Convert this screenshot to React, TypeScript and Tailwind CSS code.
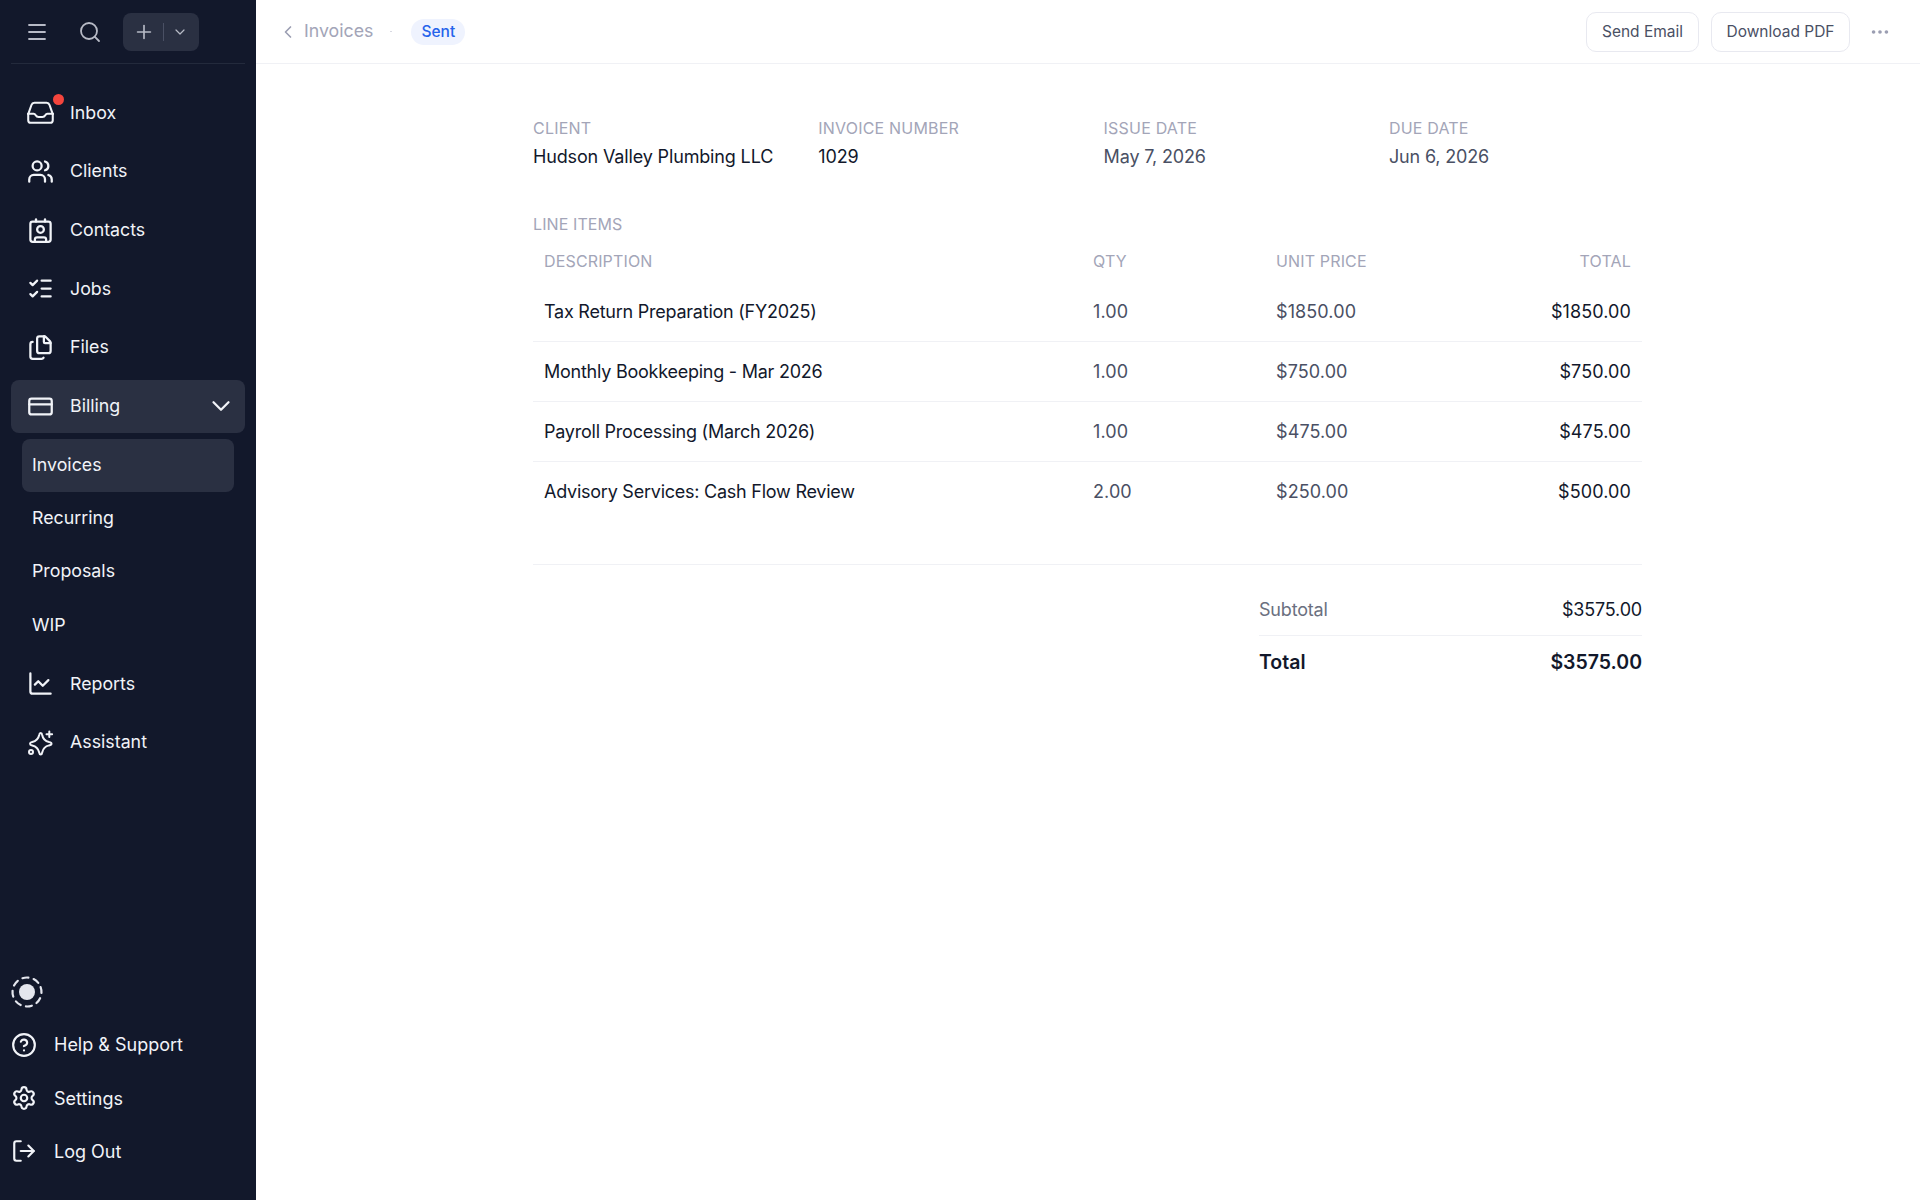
import { Menu, Search, Plus, ChevronDown, Users, Contact, ListChecks, Files, CreditCard, ChartLine, CircleHelp, Settings, LogOut, ChevronLeft, Ellipsis } from "lucide-react";

function InboxIcon() {
  return (
    <svg width="31" height="31" viewBox="0 0 24 24" fill="none" stroke="currentColor" strokeWidth="1.6" strokeLinecap="round" strokeLinejoin="round" className="shrink-0">
      <path d="M2.500 13v5a2 2 0 0 0 2 2h15a2 2 0 0 0 2-2v-5" />
      <path d="M2.500 13.200 5 6.200A2.500 2.500 0 0 1 7.300 4.500h9.400A2.500 2.500 0 0 1 19 6.200l2.500 7" />
      <path d="M2.500 13h4.200c.8 0 1.200.5 1.600 1.200.5.9 1.200 1.300 2.200 1.300h3c1 0 1.700-.4 2.200-1.300.4-.7.8-1.200 1.600-1.200h4.200" />
    </svg>
  );
}

function AssistantIcon() {
  return (
    <svg width="28" height="28" viewBox="0 0 28 28" fill="none" stroke="currentColor" strokeWidth="2" strokeLinecap="round" strokeLinejoin="round" className="shrink-0">
      <path d="M14.700 4Q15.900 4 16.200 6Q17.200 11.700 23 13Q25.500 13.500 25.500 14.700Q25.500 15.900 23 16.400Q17.400 17.700 16.200 23.500Q15.900 25.500 14.700 25.500Q13.500 25.500 13.200 23.500Q12 17.700 6.200 16.400Q4 15.900 4 14.700Q4 13.500 6.200 13Q12 11.700 13.200 6Q13.500 4 14.700 4Z" />
      <path d="M23.300 2.500v5.600M20.500 5.300h5.600" fill="none" />
      <circle cx="5" cy="23" r="2" />
    </svg>
  );
}

function StatusIcon() {
  return (
    <svg width="32" height="32" viewBox="0 0 32 32" fill="none" className="shrink-0">
      <circle cx="16" cy="16" r="14.500" stroke="#e4e6ee" strokeWidth="2.200" strokeDasharray="6 5.390" strokeLinecap="round" transform="rotate(-20 16 16)" />
      <circle cx="16" cy="16" r="8" fill="#e4e6ee" />
    </svg>
  );
}

const font = { fontFamily: "Inter, sans-serif" };

function NavItem({ icon, label, active, chevron, badge }: { icon: React.ReactNode; label: string; active?: boolean; chevron?: boolean; badge?: boolean }) {
  return (
    <div className={`relative flex h-[53px] items-center rounded-lg pl-[14px] pr-[9px] text-[#f1f3f8] ${active ? "bg-[#2a3042]" : ""}`}>
      <div className="flex w-[30px] justify-center">{icon}</div>
      <span className="ml-[15px] text-[17.800px]">{label}</span>
      {badge && <span className="absolute left-[42px] top-[8px] h-[11px] w-[11px] rounded-full bg-[#f5453d]" />}
      {chevron && <ChevronDown className="ml-auto shrink-0" size={30} strokeWidth={1.8} />}
    </div>
  );
}

function SubItem({ label, active }: { label: string; active?: boolean }) {
  return (
    <div className={`flex h-[53.300px] items-center rounded-lg pl-[10px] text-[17.800px] text-[#f1f3f8] ${active ? "bg-[#2a3042]" : ""}`}>{label}</div>
  );
}

function BottomItem({ icon, label }: { icon: React.ReactNode; label: string }) {
  return (
    <div className="flex h-[53.300px] items-center text-[#f1f3f8]">
      <div className="flex w-[26px] justify-center">{icon}</div>
      <span className="ml-[17px] text-[18px]">{label}</span>
    </div>
  );
}

const rows = [
  ["Tax Return Preparation (FY2025)", "1.00", "$1850.00", "$1850.00"],
  ["Monthly Bookkeeping - Mar 2026", "1.00", "$750.00", "$750.00"],
  ["Payroll Processing (March 2026)", "1.00", "$475.00", "$475.00"],
  ["Advisory Services: Cash Flow Review", "2.00", "$250.00", "$500.00"],
];

const meta = [
  ["CLIENT", "Hudson Valley Plumbing LLC", "text-[#12182b]"],
  ["INVOICE NUMBER", "1029", "text-[#12182b]"],
  ["ISSUE DATE", "May 7, 2026", "text-[#4a5064]"],
  ["DUE DATE", "Jun 6, 2026", "text-[#4a5064]"],
];

export default function App() {
  return (
    <div className="flex h-[1200px] w-[1920px] overflow-hidden bg-white" style={font}>
      <aside className="flex h-full w-[256px] shrink-0 flex-col bg-[#12182b]">
        <div className="mx-[11px] flex h-[64px] shrink-0 items-center border-b border-[#232a3c] pl-[14px] text-[#b7bac6]">
          <Menu size={24} strokeWidth={1.8} />
          <Search size={24} strokeWidth={1.8} className="ml-[29px]" />
          <div className="ml-[21px] flex h-[38px] w-[76px] items-center rounded-lg bg-[#2a3042] pl-[10px]">
            <Plus size={22} strokeWidth={1.8} />
            <span className="ml-[8px] h-[18px] w-px bg-[#4a5064]" />
            <ChevronDown size={16} strokeWidth={1.8} className="ml-[8px]" />
          </div>
        </div>
        <nav className="mt-[22.400px] flex flex-col gap-[5.700px] px-[11px]">
          <NavItem icon={<InboxIcon />} label="Inbox" badge />
          <NavItem icon={<Users size={27} strokeWidth={2} />} label="Clients" />
          <NavItem icon={<Contact size={27} strokeWidth={2} />} label="Contacts" />
          <NavItem icon={<ListChecks size={27} strokeWidth={2} />} label="Jobs" />
          <NavItem icon={<Files size={27} strokeWidth={2} />} label="Files" />
          <NavItem icon={<CreditCard size={27} strokeWidth={2} />} label="Billing" active chevron />
          <div className="px-[11px]">
            <SubItem label="Invoices" active />
            <SubItem label="Recurring" />
            <SubItem label="Proposals" />
            <SubItem label="WIP" />
          </div>
          <NavItem icon={<ChartLine size={27} strokeWidth={2} />} label="Reports" />
          <NavItem icon={<AssistantIcon />} label="Assistant" />
        </nav>
        <div className="mt-auto flex flex-col px-[11px] pb-[22px]">
          <div className="flex h-[53.300px] items-center pt-[2px]"><StatusIcon /></div>
          <BottomItem icon={<CircleHelp size={26} strokeWidth={2} />} label="Help & Support" />
          <BottomItem icon={<Settings size={26} strokeWidth={2} />} label="Settings" />
          <BottomItem icon={<LogOut size={26} strokeWidth={2} />} label="Log Out" />
        </div>
      </aside>
      <main className="flex min-w-0 flex-1 flex-col">
        <header className="flex h-[64px] shrink-0 items-center border-b border-[#f0f1f5] pl-[22px] pr-[29px]">
          <ChevronLeft size={20} strokeWidth={2} className="text-[#9b9eb2]" />
          <span className="ml-[6px] text-[17.750px] text-[#a3a5b8]">Invoices</span>
          <span className="ml-[17px] h-[1px] w-[2px] bg-[#d8d9e2]" />
          <span className="ml-[19px] flex h-[26px] items-center rounded-full bg-[#eff3fe] px-[10px] text-[15.500px] font-medium text-[#2563eb]">Sent</span>
          <button className="ml-auto flex h-[40px] w-[113px] items-center justify-center rounded-[10px] border border-[#e8e9f0] text-[15.500px] text-[#4a5064]">Send Email</button>
          <button className="ml-[12px] flex h-[40px] w-[139px] items-center justify-center rounded-[10px] border border-[#e8e9f0] text-[15.500px] text-[#4a5064]">Download PDF</button>
          <Ellipsis size={22} strokeWidth={2} className="ml-[19px] text-[#9b9eb2]" />
        </header>
        <div className="ml-[277px] mt-[52px] w-[1109px]">
          <div className="grid grid-cols-[repeat(4,285.300px)]">
            {meta.map(([k, v, c]) => (
              <div key={k}>
                <div className="text-[16px] leading-[24px] tracking-[0.2px] text-[#a3a5b8]">{k}</div>
                <div className={`mt-[3px] text-[18px] leading-[28px] tracking-[-0.15px] ${c}`}>{v}</div>
              </div>
            ))}
          </div>
          <div className="mt-[41px] text-[16px] leading-[24px] tracking-[0.1px] text-[#a3a5b8]">LINE ITEMS</div>
          <div className="mt-[6px] grid h-[40px] grid-cols-[549px_183px_1fr_auto] items-center px-[11px] pb-[2px] text-[16px] tracking-[0.15px] text-[#a3a5b8]">
            <span>DESCRIPTION</span><span>QTY</span><span>UNIT PRICE</span><span>TOTAL</span>
          </div>
          {rows.map((r, i) => (
            <div key={r[0]} className={`grid h-[60px] grid-cols-[549px_183px_1fr_auto] items-center border-b px-[11px] text-[18px] ${i < 3 ? "border-[#f0f1f5]" : "border-transparent"}`}>
              <span className="tracking-[-0.24px] text-[#12182b]">{r[0]}</span>
              <span className="tracking-[0.1px] text-[#4a5064]">{r[1]}</span>
              <span className="tracking-[0.1px] text-[#4a5064]">{r[2]}</span>
              <span className="tracking-[0.1px] text-[#12182b]">{r[3]}</span>
            </div>
          ))}
          <div className="mt-[42px] border-t border-[#f0f1f5] pt-[25px]">
            <div className="ml-auto w-[383px]">
              <div className="flex h-[46px] items-center justify-between border-b border-[#f0f1f5] pb-[6px] text-[18px] tracking-[-0.18px]">
                <span className="text-[#6b7080]">Subtotal</span><span className="text-[#12182b]">$3575.00</span>
              </div>
              <div className="flex h-[54px] items-center justify-between text-[19.500px] font-semibold text-[#12182b]">
                <span>Total</span><span>$3575.00</span>
              </div>
            </div>
          </div>
        </div>
      </main>
    </div>
  );
}
